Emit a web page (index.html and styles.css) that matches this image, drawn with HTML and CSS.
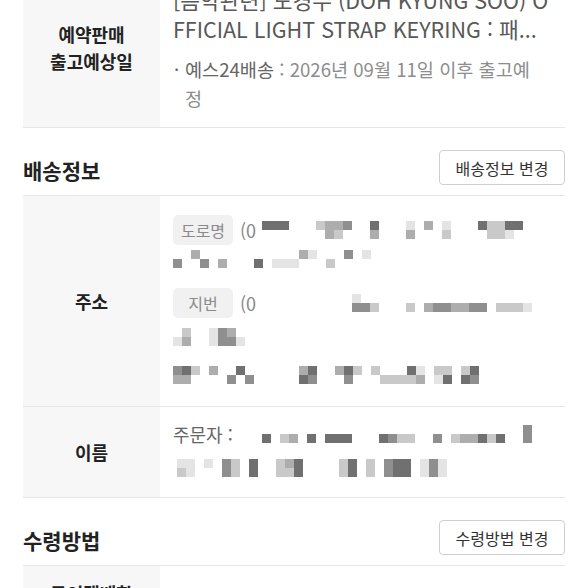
FILE: index.html
```html
<!DOCTYPE html>
<html lang="ko">
<head>
<meta charset="utf-8">
<title>주문정보</title>
<link rel="stylesheet" href="styles.css">
</head>
<body>
<div class="page">
  <div class="tbl tbl-first">
    <div class="row">
      <div class="lbl">예약판매<br>출고예상일</div>
      <div class="val val-product">
        <div class="title">
          <div class="tl">[음악관련] 도경수 (DOH KYUNG SOO) O</div>
          <div class="tl">FFICIAL LIGHT STRAP KEYRING : 패...</div>
        </div>
        <div class="ship">
          <span class="dot">·</span>
          <span class="st"><span class="sn">예스24배송</span> : 2026년 09월 11일 이후 출고예<br>정</span>
        </div>
      </div>
    </div>
  </div>

  <div class="sec-head">
    <h2 class="sec-title">배송정보</h2>
    <button class="btn" type="button">배송정보 변경</button>
  </div>

  <div class="tbl">
    <div class="row">
      <div class="lbl">주소</div>
      <div class="val val-addr">
        <div class="addr">
          <div class="ln big">
            <span class="badge">도로명</span><span class="paren">(0</span>
            <span class="mz"><i class="a"></i><i></i><i class="a"></i><i></i><i class="a"></i><i></i><i></i><i></i><i></i><i></i><i></i><i></i><i class="d"></i><i></i><i class="c"></i><i class="c"></i><i class="c"></i><i class="d"></i><i class="b"></i><i></i><i></i><i></i><i></i><i></i><i class="a"></i><i class="c"></i><i></i><i></i><i></i><i></i><i></i><i></i><i class="e"></i><i class="c"></i><i></i><i></i><i class="c"></i><i></i><i></i><i></i><i class="e"></i><i class="d"></i><i></i><i></i><i></i><i></i><i></i><i></i><i class="a"></i><i></i><i class="d"></i><i class="d"></i><i class="d"></i><i class="d"></i><i class="a"></i><i class="e"></i><i class="a"></i><i></i></span>
          </div>
          <div class="ln">
            <span class="mz"><i></i><i class="b"></i><i></i><i></i><i class="c"></i><i></i><i></i><i class="b"></i><i></i><i></i><i></i><i class="c"></i><i></i><i></i><i></i><i></i><i></i><i></i><i></i><i class="a"></i><i></i><i></i><i></i><i class="e"></i><i></i><i class="e"></i><i></i><i class="e"></i><i class="c"></i><i></i><i class="e"></i><i></i><i></i><i></i><i></i><i class="d"></i><i></i><i></i><i class="b"></i><i></i><i></i><i></i><i class="e"></i><i></i></span>
          </div>
        </div>
        <div class="addr addr-second">
          <div class="ln big">
            <span class="badge">지번</span><span class="paren">(0</span>
            <span class="mz"><i></i><i></i><i></i><i></i><i></i><i></i><i></i><i></i><i></i><i></i><i></i><i></i><i></i><i></i><i></i><i></i><i></i><i></i><i></i><i></i><i class="e"></i><i class="b"></i><i></i><i class="b"></i><i></i><i class="d"></i><i></i><i></i><i></i><i></i><i></i><i></i><i></i><i class="d"></i><i></i><i></i><i></i><i class="c"></i><i></i><i class="b"></i><i></i><i class="b"></i><i></i><i class="c"></i><i></i><i class="c"></i><i></i><i class="b"></i><i></i><i class="b"></i><i></i><i></i><i></i><i class="d"></i><i></i><i class="d"></i><i></i><i class="d"></i><i></i><i class="e"></i></span>
          </div>
          <div class="ln ln-gap">
            <span class="mz"><i></i><i class="e"></i><i class="d"></i><i class="c"></i><i></i><i></i><i></i><i></i><i class="e"></i><i class="e"></i><i class="b"></i><i class="b"></i><i class="c"></i><i class="b"></i><i></i><i class="e"></i></span>
          </div>
          <div class="ln ln-gap2">
            <span class="mz"><i class="b"></i><i class="c"></i><i class="a"></i><i class="c"></i><i class="d"></i><i></i><i></i><i></i><i class="c"></i><i></i><i></i><i></i><i></i><i class="b"></i><i class="a"></i><i></i><i></i><i class="b"></i><i></i><i></i><i></i><i></i><i></i><i></i><i></i><i></i><i></i><i></i><i class="c"></i><i class="a"></i><i class="a"></i><i class="b"></i><i></i><i></i><i></i><i></i><i class="c"></i><i></i><i class="a"></i><i class="b"></i><i class="d"></i><i></i><i></i><i></i><i class="d"></i><i></i><i></i><i class="d"></i><i></i><i class="d"></i><i></i><i class="d"></i><i class="a"></i><i class="d"></i><i class="e"></i><i class="c"></i><i></i><i></i><i class="d"></i><i class="e"></i><i class="d"></i><i class="a"></i><i></i><i></i><i class="d"></i><i class="a"></i><i class="a"></i><i class="b"></i></span>
          </div>
        </div>
      </div>
    </div>
    <div class="row">
      <div class="lbl">이름</div>
      <div class="val val-name">
        <div class="ln">
          <span class="who">주문자 :</span>
          <span class="mz"><i></i><i class="a"></i><i></i><i></i><i></i><i class="d"></i><i></i><i class="c"></i><i></i><i></i><i></i><i class="a"></i><i></i><i></i><i></i><i class="a"></i><i></i><i class="a"></i><i></i><i class="a"></i><i></i><i></i><i></i><i></i><i></i><i></i><i></i><i class="a"></i><i></i><i class="b"></i><i></i><i class="d"></i><i></i><i class="d"></i><i></i><i></i><i></i><i></i><i></i><i class="b"></i><i></i><i></i><i></i><i class="d"></i><i></i><i class="c"></i><i></i><i class="c"></i><i></i><i class="a"></i><i></i><i class="d"></i><i></i><i class="a"></i><i></i><i></i><i></i><i></i><i class="b"></i><i class="b"></i></span>
        </div>
        <div class="ln ln-name2">
          <span class="mz"><i class="e"></i><i class="d"></i><i class="e"></i><i class="e"></i><i></i><i></i><i class="e"></i><i></i><i></i><i></i><i class="b"></i><i class="b"></i><i class="d"></i><i class="d"></i><i></i><i></i><i class="a"></i><i class="a"></i><i></i><i></i><i></i><i></i><i class="d"></i><i class="d"></i><i class="c"></i><i class="d"></i><i class="a"></i><i class="a"></i><i></i><i></i><i></i><i></i><i></i><i></i><i></i><i></i><i class="d"></i><i class="d"></i><i class="a"></i><i class="a"></i><i></i><i></i><i class="d"></i><i class="d"></i><i></i><i></i><i class="b"></i><i class="b"></i><i class="a"></i><i class="a"></i><i class="a"></i><i class="a"></i><i></i><i></i><i class="e"></i><i class="e"></i><i class="b"></i><i class="b"></i><i class="e"></i><i class="e"></i></span>
        </div>
      </div>
    </div>
  </div>

  <div class="sec-head">
    <h2 class="sec-title">수령방법</h2>
    <button class="btn" type="button">수령방법 변경</button>
  </div>

  <div class="tbl">
    <div class="row row-last">
      <div class="lbl">무인택배함</div>
      <div class="val"></div>
    </div>
  </div>
</div>
</body>
</html>
```

FILE: styles.css
```css
* {
  box-sizing: border-box;
  margin: 0;
  padding: 0;
}

body {
  margin: 0;
  background: #ffffff;
  font-family: "Noto Sans CJK KR", "Noto Sans", sans-serif;
  color: #333333;
}

.page {
  padding: 0 23px;
  margin-top: -31px;
}

.tbl {
  border-top: 1px solid #e6e6e6;
}

.tbl-first {
  border-top: 0;
}

.row {
  display: flex;
  border-bottom: 1px solid #e6e6e6;
}

.lbl {
  width: 137px;
  flex: none;
  background: #f7f7f7;
  display: flex;
  align-items: center;
  justify-content: center;
  text-align: center;
  font-size: 18px;
  font-weight: 700;
  line-height: 27px;
  color: #222222;
}

.val {
  flex: 1;
  min-width: 0;
  padding: 0 12px 0 13px;
}

.val-product {
  padding-top: 16px;
  padding-bottom: 15px;
}

.tl {
  font-size: 21.5px;
  line-height: 29px;
  color: #585858;
  white-space: nowrap;
  overflow: hidden;
}

.ship {
  display: flex;
  margin-top: 11px;
  font-size: 18.6px;
  line-height: 29px;
  color: #8d8d8d;
}

.dot {
  width: 12px;
  flex: none;
  padding-left: 1px;
  color: #666666;
}

.sn {
  color: #666666;
}

.sec-head {
  display: flex;
  justify-content: space-between;
  align-items: center;
  padding: 22px 0 10px;
}

.sec-title {
  font-size: 21px;
  font-weight: 700;
  line-height: 30px;
  color: #222222;
  padding-top: 4px;
}

.btn {
  width: 126px;
  height: 35px;
  border: 1px solid #cfcfcf;
  border-radius: 4px;
  background: #ffffff;
  font-family: inherit;
  font-size: 16px;
  color: #333333;
}

.val-addr {
  padding-top: 19px;
  padding-bottom: 17px;
}

.addr-second {
  margin-top: 15px;
}

.ln {
  display: flex;
  align-items: center;
  height: 28px;
  font-size: 18px;
  color: #888888;
}

.ln.big {
  height: 30px;
}

.ln-gap {
  margin-top: 5px;
}

.ln-gap2 {
  margin-top: 10px;
}

.badge {
  display: inline-flex;
  align-items: center;
  justify-content: center;
  flex: none;
  width: 60px;
  height: 30px;
  margin-right: 7px;
  background: #f1f1f1;
  border-radius: 5px;
  font-size: 16px;
  color: #8a8a8a;
}

.paren {
  width: 22px;
  flex: none;
  color: #888888;
}

.mz {
  display: grid;
  grid-template-rows: 9px 9px;
  grid-auto-flow: column;
  grid-auto-columns: 9px;
}

.mz i {
  display: block;
}

.mz .a { background: #707070; }
.mz .b { background: #8f8f8f; }
.mz .c { background: #adadad; }
.mz .d { background: #c9c9c9; }
.mz .e { background: #e4e4e4; }

.val-name {
  padding-top: 13px;
  padding-bottom: 15px;
}

.who {
  width: 89px;
  flex: none;
  color: #666666;
}

.ln-name2 {
  margin-top: 6px;
  padding-left: 4px;
}

.row-last {
  height: 56px;
}
```
